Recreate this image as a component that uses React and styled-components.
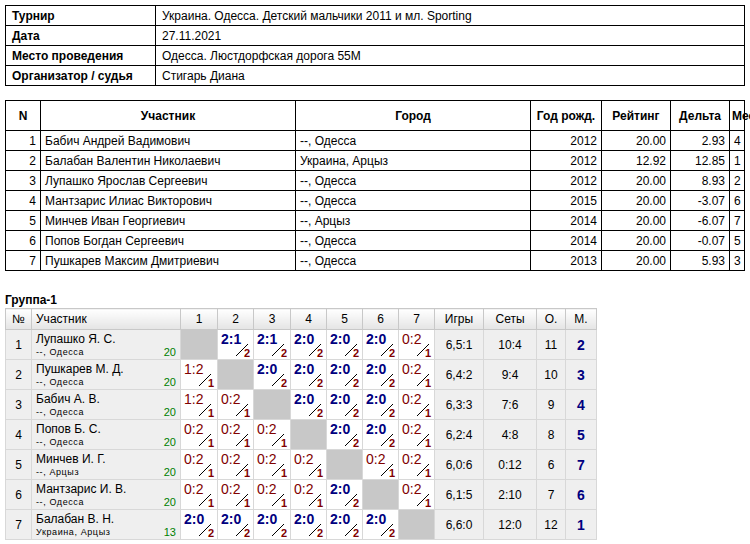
import React from "react";
import styled, { createGlobalStyle } from "styled-components";

const G = createGlobalStyle`
  body { margin: 0; background: #fff; font-family: "Liberation Sans", Arial, sans-serif; font-size: 12px; color: #000; }
`;
const Page = styled.div` padding: 5px 5px 0 5px; width: 740px; `;
const Info = styled.table`
  border-collapse: collapse; width: 740px;
  td { border: 1px solid #000; height: 19px; padding: 0 6px; line-height: 18px; }
  td:first-child { font-weight: bold; width: 137px; }
`;
const Players = styled.table`
  border-collapse: collapse; width: 740px; margin-top: 14px; table-layout: fixed;
  th, td { border: 1px solid #000; padding: 0 4px; white-space: nowrap; }
  th { height: 29px; font-weight: bold; padding: 0 2px; }
  td { height: 19px; line-height: 18px; }
`;
const PTh = styled.th` width: ${p => p.$w ? p.$w + "px" : "auto"}; `;
const Td = styled.td` text-align: ${p => p.$a || "left"}; `;
const Title = styled.div` font-weight: bold; margin-top: 22px; height: 15px; line-height: 15px; `;
const Grid = styled.table`
  border-collapse: collapse; table-layout: fixed; width: 578px;
  td { border: 1px solid #d8d8d8; padding: 0; height: 29px; }
`;
const GTh = styled.th`
  width: ${p => p.$w}px; height: 20px; font-weight: normal; border: 1px solid #c8c8c8;
  background: linear-gradient(#fff, #e4e4e4); padding: 0 0 0 ${p => p.$left ? 4 : 0}px;
  text-align: ${p => p.$left ? "left" : "center"};
`;
const Gray = styled.td` background: #efefef; text-align: center; `;
const NameCell = styled.td` background: #efefef; padding: 0 4px !important; `;
const NameLine = styled.div` line-height: 14px; white-space: nowrap; `;
const Sub = styled.div` display: flex; justify-content: space-between; font-size: 9px; letter-spacing: 0.6px; line-height: 12px; span:last-child { color: #008000; font-size: 11px; letter-spacing: 0; } `;
const Self = styled.td` background: #c8c8c8; `;
const Res = styled.td` background: #fff; position: relative; `;
const Score = styled.span`
  position: absolute; left: 3px; top: 2px; font-size: 14px; line-height: 14px;
  color: ${p => p.$w ? "#000080" : "#800000"}; font-weight: ${p => p.$w ? "bold" : "normal"};
`;
const Pts = styled.span`
  position: absolute; right: 3px; bottom: 0px; font-size: 11px; font-weight: bold; line-height: 11px; color: #800000;
`;
const Slash = styled.svg` position: absolute; left: 17px; top: 13px; `;
const Place = styled.td` background: #efefef; text-align: center; color: #000080; font-weight: bold; font-size: 14px; `;

const info = [["Турнир","Украина. Одесса. Детский мальчики 2011 и мл. Sporting"],["Дата","27.11.2021"],["Место проведения","Одесса. Люстдорфская дорога 55М"],["Организатор / судья","Стигарь Диана"]];
const pl = [
  [1,"Бабич Андрей Вадимович","--, Одесса",2012,"20.00","2.93",4],
  [2,"Балабан Валентин Николаевич","Украина, Арцыз",2012,"12.92","12.85",1],
  [3,"Лупашко Ярослав Сергеевич","--, Одесса",2012,"20.00","8.93",2],
  [4,"Мантзарис Илиас Викторович","--, Одесса",2015,"20.00","-3.07",6],
  [5,"Минчев Иван Георгиевич","--, Арцыз",2014,"20.00","-6.07",7],
  [6,"Попов Богдан Сергеевич","--, Одесса",2014,"20.00","-0.07",5],
  [7,"Пушкарев Максим Дмитриевич","--, Одесса",2013,"20.00","5.93",3],
];
const W = s => ({ s, w: true }), L = s => ({ s, w: false });
const grp = [
  ["Лупашко Я. С.","--, Одесса",20,[null,W("2:1"),W("2:1"),W("2:0"),W("2:0"),W("2:0"),L("0:2")],"6,5:1","10:4",11,2],
  ["Пушкарев М. Д.","--, Одесса",20,[L("1:2"),null,W("2:0"),W("2:0"),W("2:0"),W("2:0"),L("0:2")],"6,4:2","9:4",10,3],
  ["Бабич А. В.","--, Одесса",20,[L("1:2"),L("0:2"),null,W("2:0"),W("2:0"),W("2:0"),L("0:2")],"6,3:3","7:6",9,4],
  ["Попов Б. С.","--, Одесса",20,[L("0:2"),L("0:2"),L("0:2"),null,W("2:0"),W("2:0"),L("0:2")],"6,2:4","4:8",8,5],
  ["Минчев И. Г.","--, Арцыз",20,[L("0:2"),L("0:2"),L("0:2"),L("0:2"),null,L("0:2"),L("0:2")],"6,0:6","0:12",6,7],
  ["Мантзарис И. В.","--, Одесса",20,[L("0:2"),L("0:2"),L("0:2"),L("0:2"),W("2:0"),null,L("0:2")],"6,1:5","2:10",7,6],
  ["Балабан В. Н.","Украина, Арцыз",13,[W("2:0"),W("2:0"),W("2:0"),W("2:0"),W("2:0"),W("2:0"),null],"6,6:0","12:0",12,1],
];
const cw = [36,35,36,35,35,35,35];

export default function App() {
  return (
    <Page>
      <G />
      <Info><tbody>{info.map(r => <tr key={r[0]}><td>{r[0]}</td><td>{r[1]}</td></tr>)}</tbody></Info>
      <Players>
        <thead><tr>
          <PTh $w={30}>N</PTh><PTh $w={250}>Участник</PTh><PTh $w={230}>Город</PTh>
          <PTh $w={66}>Год рожд.</PTh><PTh $w={64}>Рейтинг</PTh><PTh $w={54}>Дельта</PTh><PTh>Место</PTh>
        </tr></thead>
        <tbody>{pl.map(r => <tr key={r[0]}>
          <Td $a="right">{r[0]}</Td><Td>{r[1]}</Td><Td>{r[2]}</Td><Td $a="right">{r[3]}</Td><Td $a="right">{r[4]}</Td><Td $a="right">{r[5]}</Td><Td $a="right">{r[6]}</Td>
        </tr>)}</tbody>
      </Players>
      <Title>Группа-1</Title>
      <Grid>
        <thead><tr>
          <GTh $w={25}>№</GTh><GTh $w={144} $left>Участник</GTh>
          {cw.map((w,i) => <GTh key={i} $w={w}>{i+1}</GTh>)}
          <GTh $w={48}>Игры</GTh><GTh $w={52}>Сеты</GTh><GTh $w={28}>О.</GTh><GTh $w={30}>М.</GTh>
        </tr></thead>
        <tbody>{grp.map((r,i) => <tr key={i}>
          <Gray>{i+1}</Gray>
          <NameCell><NameLine>{r[0]}</NameLine><Sub><span>{r[1]}</span><span>{r[2]}</span></Sub></NameCell>
          {r[3].map((c,j) => c ? <Res key={j}>
            <Score $w={c.w}>{c.s}</Score>
            <Slash width="14" height="14"><line x1="1" y1="13" x2="13" y2="1" stroke="#000" strokeWidth="1" /></Slash>
            <Pts>{c.w ? 2 : 1}</Pts>
          </Res> : <Self key={j} />)}
          <Gray>{r[4]}</Gray><Gray>{r[5]}</Gray><Gray>{r[6]}</Gray><Place>{r[7]}</Place>
        </tr>)}</tbody>
      </Grid>
    </Page>
  );
}
